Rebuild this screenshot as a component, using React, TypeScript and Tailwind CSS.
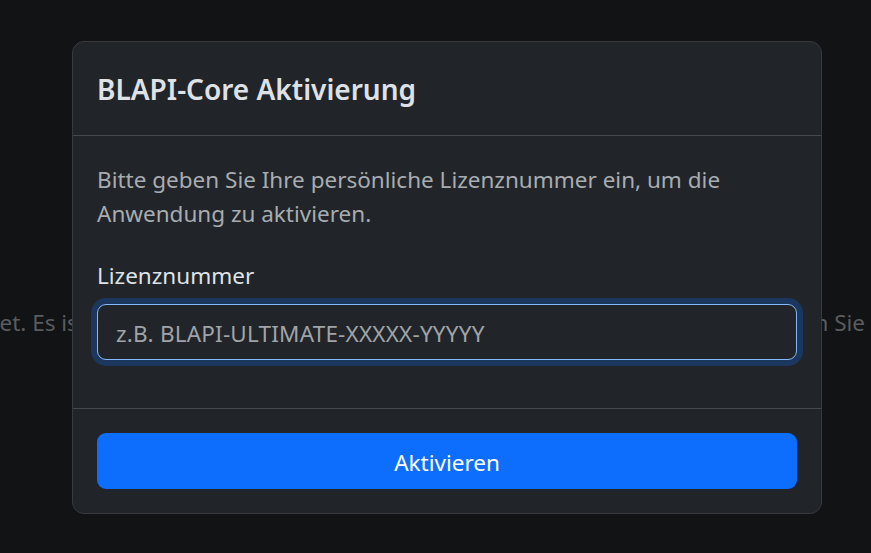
export default function App() {
  return (
    <div className="relative h-[553px] w-[871px] overflow-hidden bg-[#111315] font-['Noto_Sans',sans-serif] text-[22.5px] leading-[34px]">
      <div className="flex whitespace-nowrap pt-[306px] text-[#5a5c5f]">
        <div className="flex w-[86px] shrink-0 justify-end overflow-hidden">
          <span>Die Anwendung ist noch nicht freigeschaltet. Es ist</span>
        </div>
        <div className="ml-auto pr-[6px]">Bitte aktivieren Sie</div>
      </div>

      <div className="absolute left-[72px] top-[41px] w-[750px] rounded-[12px] border border-[#37393d] bg-[#212529]">
        <div className="border-b border-[#45484c] px-[24px] pb-[23px] pt-[25px]">
          <h5 className="text-[28px] font-semibold leading-[45px] text-[#dee2e6]">BLAPI-Core Aktivierung</h5>
        </div>
        <div className="p-[24px]">
          <p className="mb-[25px] pt-[3px] text-[#a8acb0]">
            Bitte geben Sie Ihre persönliche Lizenznummer ein, um die Anwendung zu aktivieren.
          </p>
          <label className="mb-[11px] block pt-[3px] text-[#dee2e6]">Lizenznummer</label>
          <input
            autoFocus
            type="text"
            placeholder="z.B. BLAPI-ULTIMATE-XXXXX-YYYYY"
            className="mb-[24px] block h-[56px] w-full rounded-[9px] border border-[#86b7fe] bg-[#212529] px-[18px] pt-[2px] text-[22.5px] tracking-[0.2px] text-[#dee2e6] caret-[#dee2e6] shadow-[0_0_0_6px_rgba(13,110,253,0.25)] outline-none placeholder:text-[#a0a4a8]"
          />
        </div>
        <div className="border-t border-[#45484c] p-[24px]">
          <button className="block h-[56px] w-full rounded-[9px] bg-[#0d6efd] pt-[4px] text-[22.5px] text-white">
            Aktivieren
          </button>
        </div>
      </div>
    </div>
  );
}
